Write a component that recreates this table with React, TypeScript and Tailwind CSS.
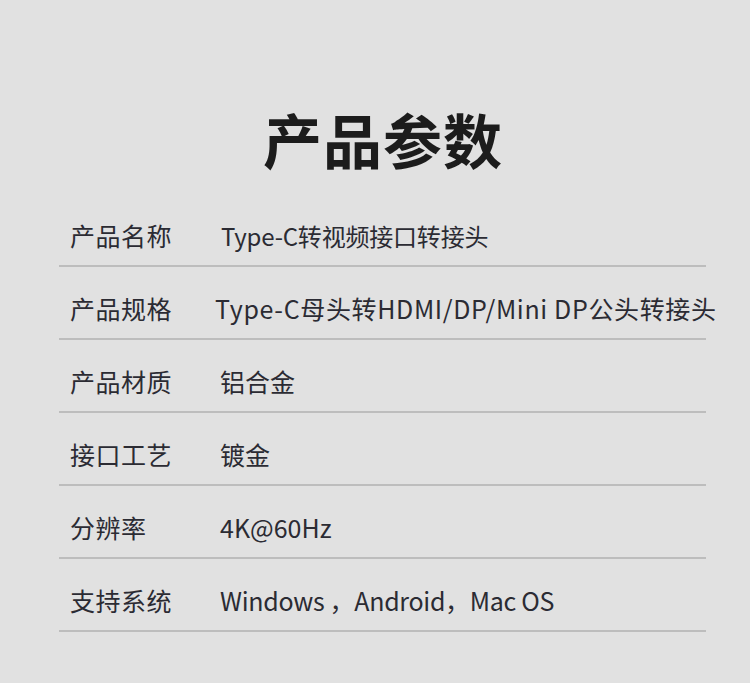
import React from "react";

const rows: { label: string; value: string; cls?: string }[] = [
  { label: "产品名称", value: "Type-C转视频接口转接头", cls: "ml-[1px] text-[24px] tracking-[-0.2px]" },
  { label: "产品规格", value: "Type-C母头转HDMI/DP/Mini DP公头转接头", cls: "-ml-[5px] tracking-[0.65px]" },
  { label: "产品材质", value: "铝合金" },
  { label: "接口工艺", value: "镀金" },
  { label: "分辨率", value: "4K@60Hz" },
  { label: "支持系统", value: "Windows ，Android，Mac OS", cls: "tracking-[-0.3px]" },
];

export default function App() {
  return (
    <div
      className="w-[750px] h-[683px] bg-[#e1e1e1] overflow-hidden"
      style={{ fontFamily: '"Noto Sans CJK SC", "Noto Sans", sans-serif' }}
    >
      <div className="h-[194px] flex justify-center pt-[99px]">
        <h1 className="text-[59px] leading-[80px] font-bold text-[#1c1c1c] tracking-[1px] ml-[16px]">产品参数</h1>
      </div>
      <div className="ml-[59px] w-[647px]">
        {rows.map((r) => (
          <div
            key={r.label}
            className="h-[73px] border-b-2 border-[#bdbdbd] pt-[13px] flex items-center text-[25px] text-[#2b2b33] whitespace-nowrap"
          >
            <div className="w-[161px] shrink-0 pl-[11px] tracking-[0.5px]">{r.label}</div>
            <div className={r.cls ?? ""}>{r.value}</div>
          </div>
        ))}
      </div>
    </div>
  );
}
